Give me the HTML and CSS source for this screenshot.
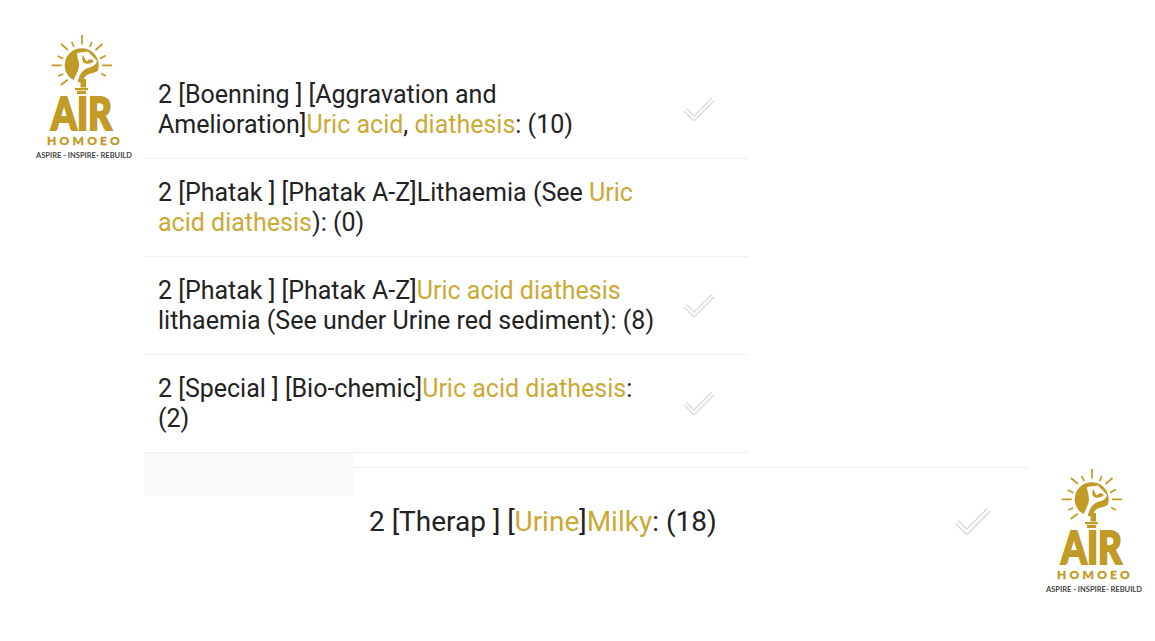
FILE: index.html
```html
<!DOCTYPE html>
<html lang="en">
<head>
<meta charset="utf-8">
<title>Rubrics</title>
<link rel="stylesheet" href="styles.css">
</head>
<body>
<main class="page">
  <ul class="list">
    <li class="row">
      <p class="rubric">2 [Boenning ] [Aggravation and Amelioration]<span class="hl">Uric acid</span>, <span class="hl">diathesis</span>: (10)</p>
      <svg class="check" viewBox="0 0 32 26"><path class="check-edge" d="M2.500 13l8.500 8.500L30 2.500"/><path class="check-core" d="M2.500 13l8.500 8.500L30 2.500"/></svg>
    </li>
    <li class="row">
      <p class="rubric">2 [Phatak ] [Phatak A-Z]Lithaemia (See <span class="hl">Uric acid diathesis</span>): (0)</p>
    </li>
    <li class="row">
      <p class="rubric">2 [Phatak ] [Phatak A-Z]<span class="hl">Uric acid diathesis</span> lithaemia (See under Urine red sediment): (8)</p>
      <svg class="check" viewBox="0 0 32 26"><path class="check-edge" d="M2.500 13l8.500 8.500L30 2.500"/><path class="check-core" d="M2.500 13l8.500 8.500L30 2.500"/></svg>
    </li>
    <li class="row">
      <p class="rubric">2 [Special ] [Bio-chemic]<span class="hl">Uric acid diathesis</span>: (2)</p>
      <svg class="check" viewBox="0 0 32 26"><path class="check-edge" d="M2.500 13l8.500 8.500L30 2.500"/><path class="check-core" d="M2.500 13l8.500 8.500L30 2.500"/></svg>
    </li>
  </ul>
  <div class="lower">
    <div class="shade"></div>
    <div class="big-row">
      <p class="big-rubric">2 [Therap ] [<span class="hl">Urine</span>]<span class="hl">Milky</span>: (18)</p>
      <svg class="check check-big" viewBox="0 0 32 26"><path class="check-edge" d="M2.500 13l8.500 8.500L30 2.500"/><path class="check-core" d="M2.500 13l8.500 8.500L30 2.500"/></svg>
    </div>
  </div>
</main>

<div class="logo logo-a">
  <svg class="logo-art" viewBox="0 0 96 112">
    <path class="rays" d="M46 0v9.500M25 9l7 6M35.700 7l2.300 5M66.500 9l-7 6M56 7l-2.300 5M15.700 30.300h10M66 30.300h10M21.700 21l5.600 2.700M69.700 20.500L64 23.700M22.300 41l5-2M70 41l-6-3M24.700 50l7-5.300M67.300 51l-6.600-6.300"/>
    <circle class="gold" cx="45.700" cy="30.300" r="17"/>
    <path class="white" d="M47 48C47 42 50 39.500 56 38.200 60 37.300 62 36 64 33.500L68 52H47Z"/>
    <path class="white" d="M41 18L52 16.500 61 26C60 30 56 32 52 33 47 34.500 43.500 38.500 41.500 48H36.500C39 41 43 36 43 30 43 26 41 22 41 18Z"/>
    <path class="gold" d="M47 20C49 23 49 25 51 26.500 53 24 55 23.500 58 26 55 29 50 30 47 27 46 25 46 22 47 20Z"/>
    <path class="gold" d="M44.500 44h5.500v8.500h-5.500zM39 53h13v2.300H39zM41 56h9v3h-9z"/>
    <text class="air" x="45.500" y="94.500" text-anchor="middle" textLength="61" lengthAdjust="spacingAndGlyphs">AIR</text>
    <text class="homoeo" x="49" y="109.500" text-anchor="middle">HOMOEO</text>
  </svg>
  <p class="tagline">ASPIRE - INSPIRE- REBUILD</p>
</div>

<div class="logo logo-b">
  <svg class="logo-art" viewBox="0 0 96 112">
    <path class="rays" d="M46 0v9.500M25 9l7 6M35.700 7l2.300 5M66.500 9l-7 6M56 7l-2.300 5M15.700 30.300h10M66 30.300h10M21.700 21l5.600 2.700M69.700 20.500L64 23.700M22.300 41l5-2M70 41l-6-3M24.700 50l7-5.300M67.300 51l-6.600-6.300"/>
    <circle class="gold" cx="45.700" cy="30.300" r="17"/>
    <path class="white" d="M47 48C47 42 50 39.500 56 38.200 60 37.300 62 36 64 33.500L68 52H47Z"/>
    <path class="white" d="M41 18L52 16.500 61 26C60 30 56 32 52 33 47 34.500 43.500 38.500 41.500 48H36.500C39 41 43 36 43 30 43 26 41 22 41 18Z"/>
    <path class="gold" d="M47 20C49 23 49 25 51 26.500 53 24 55 23.500 58 26 55 29 50 30 47 27 46 25 46 22 47 20Z"/>
    <path class="gold" d="M44.500 44h5.500v8.500h-5.500zM39 53h13v2.300H39zM41 56h9v3h-9z"/>
    <text class="air" x="45.500" y="94.500" text-anchor="middle" textLength="61" lengthAdjust="spacingAndGlyphs">AIR</text>
    <text class="homoeo" x="49" y="109.500" text-anchor="middle">HOMOEO</text>
  </svg>
  <p class="tagline">ASPIRE - INSPIRE- REBUILD</p>
</div>
</body>
</html>
```
FILE: styles.css
```css
html, body {
  margin: 0;
  padding: 0;
  background: #fff;
  overflow: hidden;
}
body {
  width: 1155px;
  height: 641px;
  position: relative;
  font-family: Roboto, "Liberation Sans", sans-serif;
  color: #222;
}
.page {
  padding: 61px 0 0 144px;
}
.list {
  list-style: none;
  margin: 0;
  padding: 0;
  width: 604px;
}
.row {
  height: 97px;
  border-bottom: 1px solid #f1f1f1;
  display: flex;
  align-items: center;
  padding-left: 14px;
}
.rubric {
  margin: 0;
  width: 500px;
  font-size: 25px;
  line-height: 29.5px;
  flex: none;
}
.hl {
  color: #cba935;
}
.check {
  width: 32px;
  height: 26px;
  margin-left: 25px;
  flex: none;
}
.check path {
  fill: none;
}
.check-edge {
  stroke: #d9d9d9;
  stroke-width: 4.6;
  stroke-linejoin: round;
}
.check-core {
  stroke: #fff;
  stroke-width: 2.2;
  stroke-linejoin: round;
}
.lower {
  display: flex;
}
.shade {
  width: 209px;
  height: 43px;
  background: #f9f9f9;
}
.big-row {
  width: 675px;
  height: 110px;
  margin-top: 14px;
  border-top: 1px solid #f1f1f1;
  display: flex;
  align-items: center;
  padding-left: 16px;
  padding-bottom: 2px;
  box-sizing: border-box;
}
.big-rubric {
  margin: 0;
  width: 585px;
  font-size: 28px;
  line-height: 36px;
  flex: none;
}
.check-big {
  width: 37px;
  height: 30px;
  margin-left: 0;
}
.logo {
  position: absolute;
  width: 96px;
}
.logo-a {
  left: 36px;
  top: 35px;
}
.logo-b {
  left: 1046px;
  top: 469px;
}
.logo-art {
  display: block;
  width: 96px;
  height: 112px;
}
.rays {
  fill: none;
  stroke: #c19b26;
  stroke-width: 1.7;
}
.gold {
  fill: #c19b26;
}
.white {
  fill: #fff;
}
.air {
  font-family: Lato, "Open Sans", sans-serif;
  font-weight: 900;
  font-size: 45px;
  fill: #c19b26;
  stroke: #c19b26;
  stroke-width: 2;
}
.homoeo {
  font-family: Lato, sans-serif;
  font-weight: 900;
  font-size: 12px;
  letter-spacing: 3.2px;
  fill: #c19b26;
  stroke: #c19b26;
  stroke-width: 0.3;
}
.tagline {
  margin: 4px 0 0;
  font-family: Lato, sans-serif;
  font-weight: 700;
  font-size: 7.5px;
  line-height: 9px;
  white-space: nowrap;
  text-align: center;
  color: #444;
}
```
